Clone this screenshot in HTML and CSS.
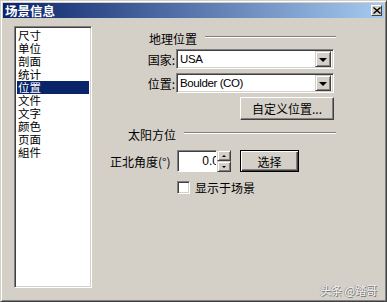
FILE: index.html
```html
<!DOCTYPE html>
<html>
<head>
<meta charset="utf-8">
<link rel="stylesheet" href="styles.css">
</head>
<body>
<div class="window">
  <div class="titlebar">
    <span class="title">场景信息</span>
    <span class="close"><svg width="8" height="7" viewBox="0 0 8 7"><path d="M0.5 0.5L7.5 6.5M7.5 0.5L0.5 6.5" stroke="#000" stroke-width="1.4" fill="none"/></svg></span>
  </div>
  <div class="content">
    <ul class="list">
      <li>尺寸</li>
      <li>单位</li>
      <li>剖面</li>
      <li>统计</li>
      <li class="selected">位置</li>
      <li>文件</li>
      <li>文字</li>
      <li>颜色</li>
      <li>页面</li>
      <li>組件</li>
    </ul>
    <div class="panel">
      <div class="group group-geo"><span class="group-title">地理位置</span><span class="rule"></span></div>
      <div class="field">
        <span class="label">国家:</span>
        <div class="combo"><span class="combo-text">USA</span><span class="drop"><span class="arrow"></span></span></div>
      </div>
      <div class="field">
        <span class="label">位置:</span>
        <div class="combo"><span class="combo-text">Boulder (CO)</span><span class="drop"><span class="arrow"></span></span></div>
      </div>
      <div class="actions">
        <div class="btn btn-custom">自定义位置...</div>
      </div>
      <div class="group group-sun"><span class="group-title">太阳方位</span><span class="rule"></span></div>
      <div class="spin-row">
        <span class="spin-label">正北角度(°)</span>
        <div class="spin">
          <div class="spin-input"><span>0.0</span></div>
          <div class="spin-btns">
            <span class="spin-btn"><span class="up"></span></span>
            <span class="spin-btn"><span class="down"></span></span>
          </div>
        </div>
        <div class="btn btn-default">选择</div>
      </div>
      <div class="check-row">
        <span class="checkbox"></span>
        <span class="check-label">显示于场景</span>
      </div>
    </div>
  </div>
  <div class="watermark">头条 @踏哥</div>
</div>
</body>
</html>
```

FILE: styles.css
```css
* { box-sizing: border-box; margin: 0; padding: 0; }

body {
  margin: 0;
  background: #d4d0c8;
  font: 12px/13px "Noto Sans CJK SC", "Liberation Sans", sans-serif;
  color: #000;
}

.window {
  position: relative;
  width: 387px;
  height: 302px;
  background: #d4d0c8;
  border: 1px solid;
  border-color: #d4d0c8 #404040 #404040 #d4d0c8;
  box-shadow: inset 1px 1px #fff, inset -1px -1px #808080;
  padding: 2px;
  display: flex;
  flex-direction: column;
}

.titlebar {
  height: 15px;
  background: linear-gradient(to right, #0a246a, #a6caf0);
  display: flex;
  align-items: center;
  justify-content: space-between;
  padding: 0 2px 0 2px;
}

.title {
  color: #fff;
  font-weight: bold;
  font-size: 12.5px;
  line-height: 13px;
}

.close {
  width: 11px;
  height: 11px;
  background: #d4d0c8;
  border: 1px solid;
  border-color: #fff #404040 #404040 #fff;
  display: flex;
  align-items: center;
  justify-content: center;
}

.content {
  display: flex;
  padding: 8px 0 0 11px;
  flex: 1;
}

.list {
  list-style: none;
  width: 78px;
  height: 262px;
  background: #fff;
  border: 1px solid;
  border-color: #808080 #fff #fff #808080;
  box-shadow: inset 1px 1px #404040, inset -1px -1px #d4d0c8;
  padding: 2px;
}

.list li {
  height: 13px;
  line-height: 13px;
  font-size: 11.5px;
  padding-left: 1px;
}

.list li.selected {
  background: #0a246a;
  color: #fff;
}

.panel {
  flex: 1;
  padding: 6px 50px 0 0;
  display: flex;
  flex-direction: column;
}

.group {
  display: flex;
  align-items: flex-start;
  height: 13px;
}

.group-geo { margin-left: 57px; }
.group-sun { margin-left: 36px; margin-top: 8px; }

.group-title { white-space: nowrap; }

.rule {
  flex: 1;
  height: 2px;
  margin: 4px -2px 0 8px;
  border-top: 1px solid #808080;
  border-bottom: 1px solid #fff;
}

.field {
  display: flex;
  align-items: center;
  height: 20px;
  margin-top: 4px;
}

.label {
  width: 84px;
  text-align: right;
  padding-right: 1px;
}

.combo {
  flex: 1;
  height: 20px;
  background: #fff;
  border: 1px solid;
  border-color: #808080 #fff #fff #808080;
  box-shadow: inset 1px 1px #404040, inset -1px -1px #d4d0c8;
  display: flex;
  align-items: center;
  padding: 2px;
}

.combo-text {
  flex: 1;
  padding-left: 1px;
  font-family: "Liberation Sans", sans-serif;
  font-size: 11.5px;
  letter-spacing: -0.4px;
}

.drop {
  width: 16px;
  height: 16px;
  background: #d4d0c8;
  border: 1px solid;
  border-color: #d4d0c8 #404040 #404040 #d4d0c8;
  box-shadow: inset 1px 1px #fff, inset -1px -1px #808080;
  display: flex;
  align-items: center;
  justify-content: center;
}

.arrow {
  width: 0;
  height: 0;
  border-left: 4px solid transparent;
  border-right: 4px solid transparent;
  border-top: 4px solid #000;
  margin-top: 1px;
}

.actions {
  display: flex;
  justify-content: flex-end;
  margin-top: 4px;
}

.btn {
  background: #d4d0c8;
  border: 1px solid;
  border-color: #fff #404040 #404040 #fff;
  box-shadow: inset -1px -1px #808080;
  display: flex;
  align-items: center;
  justify-content: center;
}

.btn-custom {
  width: 94px;
  height: 23px;
}

.spin-row {
  display: flex;
  align-items: center;
  height: 22px;
  margin-top: 9px;
}

.spin-label {
  width: 85px;
  padding-left: 18px;
  white-space: nowrap;
}

.spin {
  display: flex;
  height: 22px;
}

.spin-input {
  width: 40px;
  height: 22px;
  background: #fff;
  border: 1px solid;
  border-color: #808080 #fff #fff #808080;
  box-shadow: inset 1px 1px #404040;
  display: flex;
  align-items: center;
  justify-content: flex-end;
  overflow: hidden;
  padding-right: 0;
}

.spin-input span {
  font-family: "Liberation Sans", sans-serif;
  font-size: 12px;
  margin-right: -3px;
}

.spin-btns {
  width: 14px;
  display: flex;
  flex-direction: column;
}

.spin-btn {
  height: 11px;
  background: #d4d0c8;
  border: 1px solid;
  border-color: #d4d0c8 #404040 #404040 #d4d0c8;
  box-shadow: inset 1px 1px #fff, inset -1px -1px #808080;
  display: flex;
  align-items: center;
  justify-content: center;
}

.up {
  width: 0;
  height: 0;
  border-left: 2px solid transparent;
  border-right: 2px solid transparent;
  border-bottom: 2px solid #000;
}

.down {
  width: 0;
  height: 0;
  border-left: 2px solid transparent;
  border-right: 2px solid transparent;
  border-top: 2px solid #000;
}

.btn-default {
  width: 59px;
  height: 22px;
  margin-left: 9px;
  border: 1px solid #000;
  box-shadow: inset 1px 1px #fff, inset -1px -1px #404040, inset -2px -2px #808080;
}

.check-row {
  display: flex;
  align-items: center;
  margin-top: 9px;
  margin-left: 85px;
}

.checkbox {
  width: 13px;
  height: 13px;
  background: #fff;
  border: 1px solid;
  border-color: #808080 #fff #fff #808080;
  box-shadow: inset 1px 1px #404040, inset -1px -1px #d4d0c8;
}

.check-label {
  margin-left: 5px;
}

.watermark {
  position: absolute;
  right: 9px;
  bottom: 5px;
  font-size: 11px;
  line-height: 12px;
  color: #f4f4f4;
  text-shadow: 1px 1px 0 #777, -1px 0 0 #999;
}
```
